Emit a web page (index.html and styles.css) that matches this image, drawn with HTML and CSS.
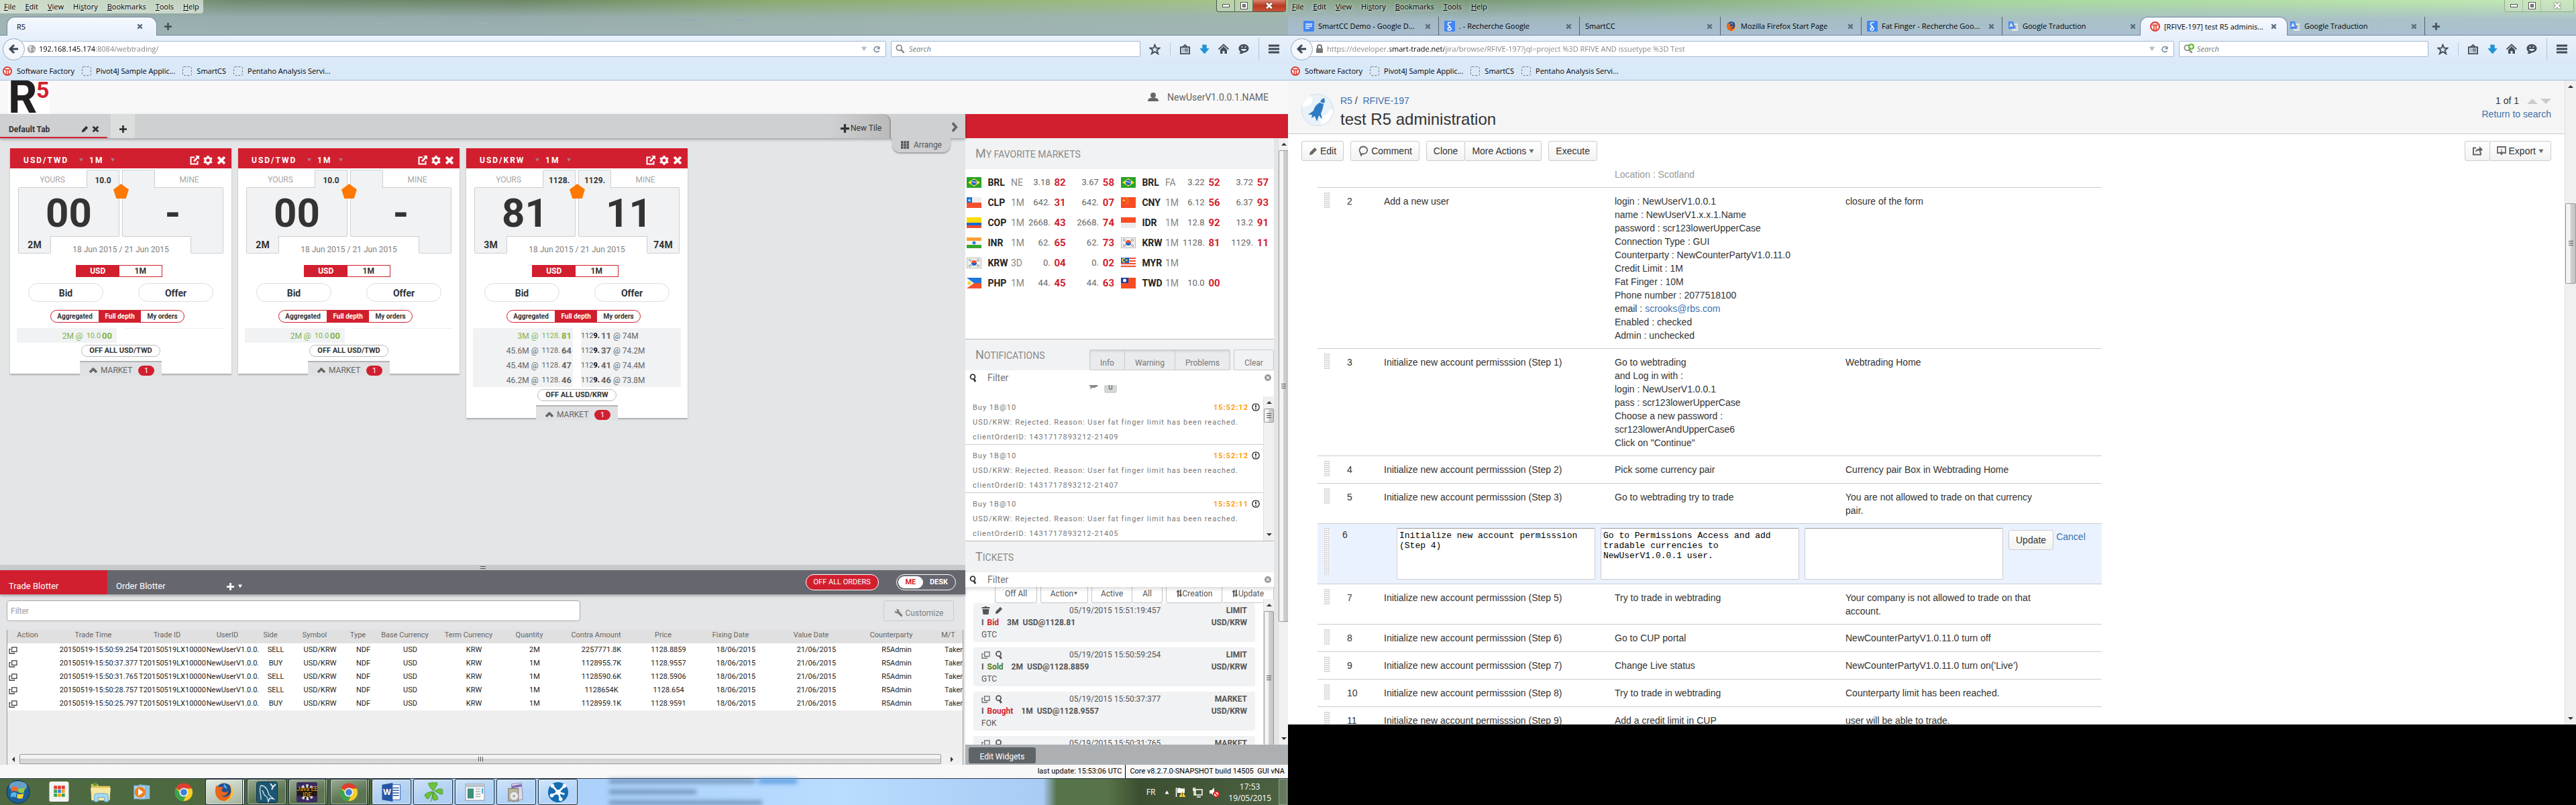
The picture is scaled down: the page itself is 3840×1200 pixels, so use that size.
FILE: index.html
```html
<!DOCTYPE html>
<html lang="en">
<head>
<meta charset="utf-8">
<title>R5 webtrading</title>
<link rel="stylesheet" href="styles.css">
</head>
<body>
<svg class="defs" aria-hidden="true">
  <symbol id="i-back" viewBox="0 0 16 16"><path d="M8 2 2 8l6 6M2.500 8H14" fill="none" stroke="#3b4654" stroke-width="3"/></symbol>
  <symbol id="i-x" viewBox="0 0 10 10"><path d="M1.500 1.500l7 7M8.500 1.500l-7 7" fill="none" stroke="currentColor" stroke-width="2.600"/></symbol>
  <symbol id="i-plus" viewBox="0 0 12 12"><path d="M6 0v12M0 6h12" fill="none" stroke="currentColor" stroke-width="3"/></symbol>
  <symbol id="i-down" viewBox="0 0 10 10"><path d="M0 1h10L5 9z" fill="currentColor"/></symbol>
  <symbol id="i-up" viewBox="0 0 10 10"><path d="M0 9h10L5 1z" fill="currentColor"/></symbol>
  <symbol id="i-chev" viewBox="0 0 12 8"><path d="M1 7l5-5 5 5" fill="none" stroke="currentColor" stroke-width="3.500"/></symbol>
  <symbol id="i-right" viewBox="0 0 10 16"><path d="M1 1l6 7-6 7" fill="none" stroke="currentColor" stroke-width="4"/></symbol>
  <symbol id="i-reload" viewBox="0 0 14 14"><path d="M11 9.500A4.600 4.600 0 1 1 10 3.500" fill="none" stroke="#8496a8" stroke-width="2.200"/><path d="M12.500 1v6h-6z" fill="#8496a8"/></symbol>
  <symbol id="i-globe" viewBox="0 0 16 16"><circle cx="8" cy="8" r="7" fill="#a3a3a3"/><path d="M3 4l4-2 2 3-3 2 2 2-1 4-3-4zM10 8l4-1-2 5z" fill="#e4e4e4"/></symbol>
  <symbol id="i-lock" viewBox="0 0 12 14"><path d="M3 7V4a3 3 0 0 1 6 0v3" fill="none" stroke="#777" stroke-width="2"/><rect x="1" y="6" width="10" height="7" rx="1" fill="#777"/></symbol>
  <symbol id="i-mag" viewBox="0 0 16 16"><circle cx="6" cy="6" r="4.500" fill="none" stroke="currentColor" stroke-width="2"/><path d="M9.500 9.500l5 5" stroke="currentColor" stroke-width="3"/></symbol>
  <symbol id="i-addengine" viewBox="0 0 10 10"><circle cx="5" cy="5" r="5" fill="#5cb615"/><path d="M5 2v6M2 5h6" stroke="#fff" stroke-width="2"/></symbol>
  <symbol id="i-star" viewBox="0 0 18 18"><path d="M9 2l2 5h5.500l-4.300 3.500L14 16l-5-3.200L4 16l1.800-5.500L1.500 7H7z" fill="none" stroke="#454f5b" stroke-width="2"/></symbol>
  <symbol id="i-clip" viewBox="0 0 16 16"><path d="M1 4.500h14V15H1zM5 4l3-3 3 3" fill="none" stroke="#454f5b" stroke-width="2"/><path d="M4 7.500h1.500M7 7.500h6M4 9.700h1.500M7 9.700h6M4 12h1.500M7 12h6" stroke="#454f5b" stroke-width="1.300"/></symbol>
  <symbol id="i-dl" viewBox="0 0 16 16"><path d="M5 1h6v6h4l-7 8-7-8h4z" fill="#1d95dc" stroke="#1278b8" stroke-width=".6"/></symbol>
  <symbol id="i-home" viewBox="0 0 16 16"><path d="M.5 8.500L8 1.500l7.500 7" fill="none" stroke="#454f5b" stroke-width="1.800"/><path d="M3 9l5-5 5 5v6H9.500v-4h-3v4H3z" fill="#454f5b"/></symbol>
  <symbol id="i-chat" viewBox="0 0 16 16"><path d="M8 1c4.500 0 7.500 2.700 7.500 6S12 13.500 8 13.500c-2 1.500-4 2-6.500 1.500C2.500 14 3 13 3 12 1.500 11 .5 9 .5 7 .5 3.700 3.500 1 8 1z" fill="#454f5b"/><path d="M4 8h8c0 4-8 4-8 0z" fill="#dfeafa"/><circle cx="5.500" cy="5" r="1.100" fill="#dfeafa"/><circle cx="10.500" cy="5" r="1.100" fill="#dfeafa"/></symbol>
  <symbol id="i-menu" viewBox="0 0 16 14"><path d="M0 2h16M0 7h16M0 12h16" stroke="#3f4852" stroke-width="3"/></symbol>
  <symbol id="i-factory" viewBox="0 0 14 14"><circle cx="7" cy="7" r="6" fill="#fff" stroke="#dd3b31" stroke-width="2"/><path d="M3 5h8M5.500 5v7M8.500 5v7" stroke="#dd3b31" stroke-width="1.600"/></symbol>
  <symbol id="i-docs" viewBox="0 0 16 16"><rect width="16" height="16" rx="1" fill="#4285f4"/><path d="M3 5h10M3 8h10M3 11h6" stroke="#fff" stroke-width="1.500"/></symbol>
  <symbol id="i-google" viewBox="0 0 16 16"><rect width="16" height="16" rx="1" fill="#4285f4"/><path d="M10.500 2.500H8a2.500 2.500 0 1 0 0 5.200c1 .4-1.500 1 0 2 4 1 2 4.500-.5 4.300-3 0-3.500-3.500 1-3.900" fill="none" stroke="#fff" stroke-width="1.500"/></symbol>
  <symbol id="i-trad" viewBox="0 0 16 16"><rect x="6" y="4" width="9" height="11" fill="#e2e2e2"/><path d="M8 8h5M10.500 7l-2 5M10 9l3 3" stroke="#777"/><path d="M1 1h7l3 11H1z" fill="#4a86ef"/><path d="M3 9l2-5 2 5M4 7.500h2.500" fill="none" stroke="#fff" stroke-width="1.200"/></symbol>
  <symbol id="i-fox" viewBox="0 0 32 32"><circle cx="16" cy="15" r="13" fill="#214f92"/><path d="M16 3a12 12 0 0 1 5 9l-6-4z" fill="#4fa6dd"/><path d="M4 5c1 2 2 3 4 3 2-1 5 0 7 2-3 1-4 3-2 5 3 3 7 1 9-1 0 6-5 9-10 8 5 4 13 1 15-6 1-5 0-8-3-12 6 4 8 12 5 19-4 8-15 10-22 4C1 21 1 12 4 5z" fill="#e9661a"/><path d="M25 4c6 5 7 13 4 19-3 5-8 8-13 8 8-3 13-10 11-20z" fill="#ffc83d"/></symbol>
  <symbol id="i-chrome" viewBox="0 0 32 32"><circle cx="16" cy="16" r="14" fill="#f7ce24"/><path d="M16 16L3.500 9.500A14 14 0 0 1 29 10H16z" fill="#dd3f31"/><path d="M3.500 9.500A14 14 0 0 0 15 30l6-11-10-1z" fill="#3ba24f"/><circle cx="16" cy="16" r="7" fill="#f4f4f4"/><circle cx="16" cy="16" r="5.200" fill="#3f7fd6"/></symbol>
  <symbol id="i-pencil" viewBox="0 0 14 14"><path d="M1 13l1-4.500L9.500 1 13 4.500 5.500 12z" fill="currentColor"/></symbol>
  <symbol id="i-ext" viewBox="0 0 14 14"><path d="M7 2.500H1.500v10h10V8" fill="none" stroke="currentColor" stroke-width="2"/><path d="M8 0h6v6l-2-2-5 5.500L5 7.500 10.200 2z" fill="currentColor"/></symbol>
  <symbol id="i-gear" viewBox="0 0 14 14"><circle cx="7" cy="7" r="4" fill="none" stroke="currentColor" stroke-width="3"/><path d="M7 0v3M7 11v3M1 3.500l2.500 1.500M10.500 9l2.500 1.500M1 10.500L3.500 9M10.500 5L13 3.500" stroke="currentColor" stroke-width="3"/></symbol>
  <symbol id="i-grid" viewBox="0 0 12 12"><path d="M0 2h12M0 6h12M0 10h12" stroke="currentColor" stroke-width="3.400" stroke-dasharray="3.400 .9"/></symbol>
  <symbol id="i-user" viewBox="0 0 16 14"><circle cx="8" cy="4" r="4" fill="currentColor"/><path d="M0 13c0-4 3-5 5-5h6c2 0 5 1 5 5z" fill="currentColor"/></symbol>
  <symbol id="i-pent" viewBox="0 0 24 23"><path d="M12 0l12 9-4.500 14h-15L0 9z" fill="#ff7800"/></symbol>
  <symbol id="i-fmag" viewBox="0 0 12 14"><circle cx="5.500" cy="5" r="3.800" fill="none" stroke="currentColor" stroke-width="2"/><path d="M7 8l3 5" stroke="currentColor" stroke-width="3"/></symbol>
  <symbol id="i-clear" viewBox="0 0 10 10"><circle cx="5" cy="5" r="5" fill="#999"/><path d="M3.200 3.200l3.600 3.600M6.800 3.200L3.200 6.800" stroke="#fff" stroke-width="1.200"/></symbol>
  <symbol id="i-warn" viewBox="0 0 12 12"><circle cx="6" cy="6" r="5.200" fill="none" stroke="#222" stroke-width="1.300"/><path d="M6 2.800v3.800M6 7.700v1.500" stroke="#222" stroke-width="1.800"/></symbol>
  <symbol id="i-trash" viewBox="0 0 12 12"><path d="M0 1h4l.5-1h3L8 1h4v2H0zM1 4h10l-1 8H2z" fill="currentColor"/></symbol>
  <symbol id="i-copy" viewBox="0 0 14 12"><rect x="5" y="1" width="8" height="7" fill="none" stroke="currentColor" stroke-width="1.200"/><path d="M3 4H1v7h8V9.500" fill="none" stroke="currentColor" stroke-width="1.200"/></symbol>
  <symbol id="i-sort" viewBox="0 0 10 12"><path d="M3 12V2M7 0v10" stroke="currentColor" stroke-width="2"/><path d="M0 4l3-4 3 4zM4 8l3 4 3-4z" fill="currentColor"/></symbol>
  <symbol id="i-wrench" viewBox="0 0 14 14"><path d="M1 3l2 2 2-2-2-2c2-1 5 0 5 3l5 6c1 2-1 3.500-2.500 2L5 7C2 8 0 6 1 3z" fill="currentColor"/></symbol>
  <symbol id="i-bubble" viewBox="0 0 16 16"><path d="M8 1.500a6 5.500 0 1 1-2 10.600L5 15.500 4 11A5.700 5.700 0 0 1 8 1.500z" fill="none" stroke="#666" stroke-width="1.800"/></symbol>
  <symbol id="i-share" viewBox="0 0 16 14"><path d="M6 2.500H2v10h11V9" fill="none" stroke="#666" stroke-width="2"/><path d="M5 9c0-4 3-5.500 6-5.500V0l5 5-5 5V6.500C8.500 6.500 7 7 5 9z" fill="#666"/></symbol>
  <symbol id="i-export" viewBox="0 0 14 14"><path d="M4 10H1V1h12v9h-3" fill="none" stroke="#666" stroke-width="1.800"/><path d="M7 4v7M4 9l3 4 3-4z" fill="#666" stroke="#666"/></symbol>
  <symbol id="f-brl" viewBox="0 0 22 16"><rect width="22" height="16" fill="#29a329"/><path d="M11 2l9 6-9 6-9-6z" fill="#f7e62c"/><circle cx="11" cy="8" r="4" fill="#2266c8"/><path d="M7.500 7c3-.5 5 0 7 2" stroke="#fff" fill="none"/></symbol>
  <symbol id="f-clp" viewBox="0 0 22 16"><rect width="22" height="8" fill="#eee"/><rect width="8" height="8" fill="#1b74d8"/><rect y="8" width="22" height="8" fill="#f4502f"/><path d="M4 2l1.800 4.500L2 4h4L2.200 6.500z" fill="#fff"/></symbol>
  <symbol id="f-cop" viewBox="0 0 22 16"><rect width="22" height="8" fill="#ffdc00"/><rect y="8" width="22" height="4" fill="#1d64ce"/><rect y="12" width="22" height="4" fill="#f4502f"/></symbol>
  <symbol id="f-inr" viewBox="0 0 22 16"><rect width="22" height="5" fill="#ffa034"/><rect y="5" width="22" height="6" fill="#f4f4f4"/><rect y="11" width="22" height="5" fill="#36a62b"/><circle cx="11" cy="8" r="2.500" fill="#2a82dd"/></symbol>
  <symbol id="f-krw" viewBox="0 0 22 16"><rect x=".5" y=".5" width="21" height="15" fill="#f0f0f0" stroke="#bbb"/><path d="M7 8a4 4 0 0 1 8 0z" fill="#f4502f"/><path d="M7 8a4 4 0 0 0 8 0z" fill="#1d64ce"/><path d="M3 5l2-3M5 6l2-3M17 2l2 3M15 3l2 3M3 11l2 3M5 10l2 3M19 11l-2 3M17 10l-2 3" stroke="#777"/></symbol>
  <symbol id="f-php" viewBox="0 0 22 16"><rect width="22" height="8" fill="#1d79dc"/><rect y="8" width="22" height="8" fill="#f4502f"/><path d="M0 0l11 8-11 8z" fill="#f4f4f4"/><circle cx="4" cy="8" r="2.500" fill="#ffd21f"/></symbol>
  <symbol id="f-cny" viewBox="0 0 22 16"><rect width="22" height="16" fill="#f84c22"/><path d="M4.500 2l1.800 4.500L2 4h5L2.700 6.500z" fill="#ffdc2e"/><path d="M8 1.500h1M10 4h1M10 7h1M8 9h1" stroke="#ffdc2e" stroke-width="1.300"/></symbol>
  <symbol id="f-idr" viewBox="0 0 22 16"><rect width="22" height="8" fill="#f84c22"/><rect y="8" width="22" height="8" fill="#ececec"/></symbol>
  <symbol id="f-myr" viewBox="0 0 22 16"><rect width="22" height="16" fill="#f4f4f4"/><path d="M0 1h22M0 5h22M0 9h22M0 13h22" stroke="#f4502f" stroke-width="2"/><rect width="12" height="8" fill="#1b5fc4"/><path d="M6 2a2.500 2.500 0 1 0 0 4" fill="none" stroke="#ffdc2e" stroke-width="1.500"/><circle cx="8.500" cy="4" r="1.300" fill="#ffdc2e"/></symbol>
  <symbol id="f-twd" viewBox="0 0 22 16"><rect width="22" height="16" fill="#f84c22"/><rect width="11" height="8" fill="#1b3fa4"/><circle cx="5.500" cy="4" r="2.500" fill="#fff"/></symbol>
  <symbol id="t-start" viewBox="0 0 38 38"><circle cx="19" cy="19" r="18" fill="#1d5f97" stroke="#0e2f49"/><ellipse cx="19" cy="10" rx="14" ry="8" fill="#9cc9e4" opacity=".6"/><path d="M9 12c3-2 6-2 9 0l-1 7c-3-2-6-2-9 0z" fill="#ee6a2b"/><path d="M20 13c3 1 6 1 10-1l-2 8c-3 1-6 1-9-1z" fill="#9acb3a"/><path d="M8 21c3-2 6-2 9 0l-2 7c-3-2-6-2-8 0z" fill="#5bb6ea"/><path d="M18 22c3 1 6 1 10-1l-2 8c-4 1-6 1-9-1z" fill="#fbd135"/></symbol>
  <symbol id="t-apps" viewBox="0 0 30 32"><rect width="30" height="31" rx="3" fill="#f3f3f3"/><path d="M7 9h5M13 9h5M19 9h5" stroke="#e03b2e" stroke-width="5"/><path d="M7 15h5" stroke="#37a24c" stroke-width="5"/><path d="M13 15h5" stroke="#3f7fd6" stroke-width="5"/><path d="M19 15h5M13 21h5" stroke="#f2a51c" stroke-width="5"/><path d="M7 21h5M19 21h5" stroke="#37a24c" stroke-width="5"/></symbol>
  <symbol id="t-folder" viewBox="0 0 34 32"><path d="M2 3h10l2 3h18v22H2z" fill="#e7c55b"/><path d="M5 1h6v5H5z" fill="#5a9c37"/><path d="M1 9h32l-2 20H3z" fill="#f7e7a1"/><path d="M7 31V22q0-4 4-4h14q4 0 4 4v9h-6v-7H13v7z" fill="#a7d9f2" stroke="#5fa7cd"/></symbol>
  <symbol id="t-play" viewBox="0 0 30 28"><path d="M10 1l18 2v22l-18 1z" fill="#8fc0e2"/><rect x="2" y="3" width="19" height="22" fill="#aed4ec" stroke="#6da6cd"/><circle cx="12" cy="14" r="9" fill="#f08020"/><path d="M9 8l8 6-8 6z" fill="#fff"/></symbol>
  <symbol id="t-sql" viewBox="0 0 32 32"><rect x=".5" y=".5" width="31" height="31" rx="3" fill="#1b5673" stroke="#0d3146"/><path d="M7 27C8 20 3 12 7 6c6 0 10 6 12 14l7 6-6-1-2 5c-1-7-3-8-5-9-2-2-2-4-4-8" fill="none" stroke="#d9ebf4" stroke-width="1.300"/><path d="M21 3l4 5 4-4M25 8l-2 4" fill="none" stroke="#eee" stroke-width="2"/></symbol>
  <symbol id="t-java" viewBox="0 0 34 32"><rect width="33" height="32" rx="3" fill="#3b2a63"/><circle cx="16.500" cy="16" r="10" fill="#22180f" stroke="#ddd" stroke-width="5" stroke-dasharray="3.500 3"/><rect x="1" y="9" width="31" height="13" fill="#22180f"/></symbol>
  <symbol id="t-word" viewBox="0 0 32 32"><path d="M16 4h14v24H16z" fill="#fff" stroke="#2a5ba8"/><path d="M18 9h10M18 13h10M18 17h10M18 21h10" stroke="#2a5ba8" stroke-width="1.500"/><path d="M1 4l17-3v30L1 28z" fill="#2555a2"/></symbol>
  <symbol id="t-clover" viewBox="0 0 32 32"><path d="M16 14C6 4 8 0 12 3q3-4 5 0 5-4 5 1zM15 15C4 16 0 22 5 22q0 5 4 3zM18 14c10-6 14-2 11 1q3 4-2 4zM16 15c7 7 9 13 4 12-3 3-6-1-5-5zM15 15q1 8-3 15" fill="#6cc23c" stroke="#4a9a26"/></symbol>
  <symbol id="t-note" viewBox="0 0 32 28"><rect x="1" y="1" width="30" height="26" fill="#fdfdfd" stroke="#8a8f96"/><path d="M1 4h30" stroke="#b8c3ce" stroke-width="4"/><rect x="4" y="8" width="10" height="16" fill="#3f8f80"/><path d="M17 9h8M17 13h8M17 17h8M17 21h8" stroke="#bbb" stroke-width="2"/><path d="M28 8v8" stroke="#2a9adf" stroke-width="2"/></symbol>
  <symbol id="t-box" viewBox="0 0 32 32"><path d="M8 3l16-2 2 26-16 4z" fill="#dfdce9" stroke="#8d86a8"/><path d="M8 8l16-3" stroke="#8268b4" stroke-width="4"/><rect x="3" y="10" width="16" height="20" fill="#b9b49c" stroke="#77705d"/><circle cx="12" cy="22" r="7" fill="#e8e8e8" stroke="#999"/><circle cx="12" cy="22" r="2" fill="#9a9"/></symbol>
  <symbol id="t-net" viewBox="0 0 34 34"><circle cx="17" cy="17" r="16" fill="#136cb2"/><path d="M17 17L8 7M17 17L27 7M17 17L7 22M17 17l4 11M17 17l10 3" stroke="#fff" stroke-width="3"/><g fill="#fff"><circle cx="17" cy="17" r="4"/><circle cx="8" cy="7" r="3"/><circle cx="27" cy="7" r="3"/><circle cx="7" cy="22" r="3"/><circle cx="21" cy="28" r="3"/></g></symbol>
  <symbol id="i-app" viewBox="0 0 14 16"><rect x=".5" y="1.500" width="13" height="13" rx="2" fill="none" stroke="#777" stroke-dasharray="3 2"/></symbol>
</svg>

<div class="monitor monitor-left">
  <section class="browser">
    <header class="chrome">
      <div class="aero">
        <nav class="menubar boxed"><a href="#"><u>F</u>ile</a><a href="#"><u>E</u>dit</a><a href="#"><u>V</u>iew</a><a href="#">Hi<u>s</u>tory</a><a href="#"><u>B</u>ookmarks</a><a href="#"><u>T</u>ools</a><a href="#"><u>H</u>elp</a></nav>
        <div class="winctl"><button aria-label="Minimize"><i class="min"></i></button><button aria-label="Restore"><i class="max"></i></button><button class="close" aria-label="Close"><svg width="14" height="11"><use href="#i-x"/></svg></button></div>
        <div class="tabs"><div class="tab active"><span>R5</span><svg width="9" height="9"><use href="#i-x"/></svg></div><button class="newtab" aria-label="New tab"><svg width="11" height="11"><use href="#i-plus"/></svg></button></div>
      </div>
      <div class="navbar">
        <button class="back" aria-label="Back"><svg width="16" height="16"><use href="#i-back"/></svg></button>
        <div class="urlbox"><svg width="14" height="14"><use href="#i-globe"/></svg><input class="url url-app" aria-label="Address" value="192.168.145.174:8084/webtrading/"><svg class="dim" width="10" height="8"><use href="#i-down"/></svg><svg width="12" height="13"><use href="#i-reload"/></svg></div>
        <div class="searchbox"><svg width="14" height="14"><use href="#i-mag"/></svg><input aria-label="Search" placeholder="Search"></div>
        <div class="tools"><svg width="17" height="17"><use href="#i-star"/></svg><i class="bar"></i><svg width="15" height="15"><use href="#i-clip"/></svg><svg width="15" height="15"><use href="#i-dl"/></svg><svg width="16" height="16"><use href="#i-home"/></svg><svg width="16" height="16"><use href="#i-chat"/></svg><i class="bar tall"></i><svg width="16" height="14"><use href="#i-menu"/></svg></div>
      </div>
      <nav class="bookmarks"><a href="#"><svg width="14" height="14"><use href="#i-factory"/></svg>Software Factory</a><a href="#"><svg width="14" height="16"><use href="#i-app"/></svg>Pivot4J Sample Applic...</a><a href="#"><svg width="14" height="16"><use href="#i-app"/></svg>SmartCS</a><a href="#"><svg width="14" height="16"><use href="#i-app"/></svg>Pentaho Analysis Servi...</a></nav>
    </header>

    <div class="apphead"><div class="logo"><span class="logo-r">R</span><span class="logo-5">5</span></div><div class="user"><svg width="16" height="14"><use href="#i-user"/></svg>NewUserV1.0.0.1.NAME</div></div>

    <div class="workspace">
      <main class="desk">
        <div class="desktabs">
          <div class="desktab">Default Tab<span class="grow"></span><svg width="11" height="11"><use href="#i-pencil"/></svg><svg width="11" height="11"><use href="#i-x"/></svg></div>
          <button class="addtab" aria-label="Add tab"><svg width="11" height="11"><use href="#i-plus"/></svg></button>
          <span class="grow"></span>
          <button class="newtile"><svg width="13" height="13"><use href="#i-plus"/></svg>New Tile</button>
          <div class="arrangecell"><svg width="9" height="15"><use href="#i-right"/></svg><button class="arrange"><svg width="12" height="12"><use href="#i-grid"/></svg>Arrange</button></div>
        </div>

        <div class="tiles">
          <article class="tile">
            <header><b>USD/TWD</b><svg width="6" height="7"><use href="#i-down"/></svg><b class="ten">1M</b><svg width="6" height="7"><use href="#i-down"/></svg><span class="grow"></span><svg width="14" height="14"><use href="#i-ext"/></svg><svg width="14" height="14"><use href="#i-gear"/></svg><svg width="14" height="14"><use href="#i-x"/></svg></header>
            <div class="quote">
              <div class="q-head"><span class="q-side">YOURS</span><b class="q-tab">10.0</b><b class="q-tab"></b><span class="q-side">MINE</span></div>
              <div class="q-mid"><button>00</button><button>-</button></div>
              <div class="q-foot"><b class="q-tab">2M</b><span>18 Jun 2015 / 21 Jun 2015</span><b class="q-tab"></b></div>
              <svg class="pent" width="23" height="22"><use href="#i-pent"/></svg>
            </div>
            <div class="amount"><button class="on">USD</button><button>1M</button></div>
            <div class="sides"><button>Bid</button><button>Offer</button></div>
            <div class="seg"><button>Aggregated</button><button class="on">Full depth</button><button>My orders</button></div>
            <div class="depth"><div class="bids"><p class="best">2M @ <small>10.0</small><b>00</b></p></div><div class="asks"></div></div>
            <button class="offall">OFF ALL USD/TWD</button>
            <div class="market"><svg width="12" height="8"><use href="#i-chev"/></svg>MARKET<em>1</em></div>
          </article>
          <article class="tile">
            <header><b>USD/TWD</b><svg width="6" height="7"><use href="#i-down"/></svg><b class="ten">1M</b><svg width="6" height="7"><use href="#i-down"/></svg><span class="grow"></span><svg width="14" height="14"><use href="#i-ext"/></svg><svg width="14" height="14"><use href="#i-gear"/></svg><svg width="14" height="14"><use href="#i-x"/></svg></header>
            <div class="quote">
              <div class="q-head"><span class="q-side">YOURS</span><b class="q-tab">10.0</b><b class="q-tab"></b><span class="q-side">MINE</span></div>
              <div class="q-mid"><button>00</button><button>-</button></div>
              <div class="q-foot"><b class="q-tab">2M</b><span>18 Jun 2015 / 21 Jun 2015</span><b class="q-tab"></b></div>
              <svg class="pent" width="23" height="22"><use href="#i-pent"/></svg>
            </div>
            <div class="amount"><button class="on">USD</button><button>1M</button></div>
            <div class="sides"><button>Bid</button><button>Offer</button></div>
            <div class="seg"><button>Aggregated</button><button class="on">Full depth</button><button>My orders</button></div>
            <div class="depth"><div class="bids"><p class="best">2M @ <small>10.0</small><b>00</b></p></div><div class="asks"></div></div>
            <button class="offall">OFF ALL USD/TWD</button>
            <div class="market"><svg width="12" height="8"><use href="#i-chev"/></svg>MARKET<em>1</em></div>
          </article>
          <article class="tile">
            <header><b>USD/KRW</b><svg width="6" height="7"><use href="#i-down"/></svg><b class="ten">1M</b><svg width="6" height="7"><use href="#i-down"/></svg><span class="grow"></span><svg width="14" height="14"><use href="#i-ext"/></svg><svg width="14" height="14"><use href="#i-gear"/></svg><svg width="14" height="14"><use href="#i-x"/></svg></header>
            <div class="quote">
              <div class="q-head"><span class="q-side">YOURS</span><b class="q-tab">1128.</b><b class="q-tab">1129.</b><span class="q-side">MINE</span></div>
              <div class="q-mid"><button>81</button><button>11</button></div>
              <div class="q-foot"><b class="q-tab">3M</b><span>18 Jun 2015 / 21 Jun 2015</span><b class="q-tab">74M</b></div>
              <svg class="pent" width="23" height="22"><use href="#i-pent"/></svg>
            </div>
            <div class="amount"><button class="on">USD</button><button>1M</button></div>
            <div class="sides"><button>Bid</button><button>Offer</button></div>
            <div class="seg"><button>Aggregated</button><button class="on">Full depth</button><button>My orders</button></div>
            <div class="depth deep">
              <div class="bids"><p class="best">3M @ <small>1128.</small><b>81</b></p><p>45.6M @ <small>1128.</small><b>64</b></p><p>45.4M @ <small>1128.</small><b>47</b></p><p>46.2M @ <small>1128.</small><b>46</b></p></div>
              <div class="asks"><p><small>112<strong>9.</strong></small><b>11</b> @ 74M</p><p><small>112<strong>9.</strong></small><b>37</b> @ 74.2M</p><p><small>112<strong>9.</strong></small><b>41</b> @ 74.4M</p><p><small>112<strong>9.</strong></small><b>46</b> @ 73.8M</p></div>
            </div>
            <button class="offall">OFF ALL USD/KRW</button>
            <div class="market"><svg width="12" height="8"><use href="#i-chev"/></svg>MARKET<em>1</em></div>
          </article>
        </div>

        <div class="splitter"><i></i></div>
        <section class="blotter">
          <div class="blotbar"><button class="btab on">Trade Blotter</button><button class="btab">Order Blotter</button><button class="badd" aria-label="Add blotter"><svg width="11" height="11"><use href="#i-plus"/></svg><svg width="8" height="6"><use href="#i-down"/></svg></button><span class="grow"></span><button class="offorders">OFF ALL ORDERS</button><div class="medesk"><button class="on">ME</button><button>DESK</button></div></div>
          <div class="blotfilter"><input class="bfilter" aria-label="Filter trades" placeholder="Filter"><button class="custom"><svg width="13" height="14"><use href="#i-wrench"/></svg>Customize</button></div>
          <div class="blotgrid">
            <table>
              <colgroup><col class="c76"><col class="c120"><col class="c100"><col class="c80"><col class="c48"><col class="c84"><col class="c45"><col class="c95"><col class="c95"><col class="c86"><col class="c113"><col class="c87"><col class="c114"><col class="c126"><col class="c113"><col class="c57"></colgroup>
              <thead><tr><th>Action</th><th>Trade Time</th><th>Trade ID</th><th>UserID</th><th>Side</th><th>Symbol</th><th>Type</th><th>Base Currency</th><th>Term Currency</th><th>Quantity</th><th>Contra Amount</th><th>Price</th><th>Fixing Date</th><th>Value Date</th><th>Counterparty</th><th>M/T</th></tr></thead>
              <tbody>
                <tr><td><svg width="13" height="11"><use href="#i-copy"/></svg></td><td>20150519-15:50:59.254</td><td>T20150519LX10000</td><td>NewUserV1.0.0.</td><td>SELL</td><td>USD/KRW</td><td>NDF</td><td>USD</td><td>KRW</td><td>2M</td><td>2257771.8K</td><td>1128.8859</td><td>18/06/2015</td><td>21/06/2015</td><td>R5Admin</td><td>Taker</td></tr>
                <tr><td><svg width="13" height="11"><use href="#i-copy"/></svg></td><td>20150519-15:50:37.377</td><td>T20150519LX10000</td><td>NewUserV1.0.0.</td><td>BUY</td><td>USD/KRW</td><td>NDF</td><td>USD</td><td>KRW</td><td>1M</td><td>1128955.7K</td><td>1128.9557</td><td>18/06/2015</td><td>21/06/2015</td><td>R5Admin</td><td>Taker</td></tr>
                <tr><td><svg width="13" height="11"><use href="#i-copy"/></svg></td><td>20150519-15:50:31.765</td><td>T20150519LX10000</td><td>NewUserV1.0.0.</td><td>SELL</td><td>USD/KRW</td><td>NDF</td><td>USD</td><td>KRW</td><td>1M</td><td>1128590.6K</td><td>1128.5906</td><td>18/06/2015</td><td>21/06/2015</td><td>R5Admin</td><td>Taker</td></tr>
                <tr><td><svg width="13" height="11"><use href="#i-copy"/></svg></td><td>20150519-15:50:28.757</td><td>T20150519LX10000</td><td>NewUserV1.0.0.</td><td>SELL</td><td>USD/KRW</td><td>NDF</td><td>USD</td><td>KRW</td><td>1M</td><td>1128654K</td><td>1128.654</td><td>18/06/2015</td><td>21/06/2015</td><td>R5Admin</td><td>Taker</td></tr>
                <tr><td><svg width="13" height="11"><use href="#i-copy"/></svg></td><td>20150519-15:50:25.797</td><td>T20150519LX10000</td><td>NewUserV1.0.0.</td><td>BUY</td><td>USD/KRW</td><td>NDF</td><td>USD</td><td>KRW</td><td>1M</td><td>1128959.1K</td><td>1128.9591</td><td>18/06/2015</td><td>21/06/2015</td><td>R5Admin</td><td>Taker</td></tr>
              </tbody>
            </table>
            <span class="grow"></span>
            <div class="hscroll"><i class="ar l"></i><div class="hthumb"><i class="grip"></i></div><i class="ar r"></i></div>
          </div>
        </section>
      </main>

      <aside class="side">
        <div class="redbar"></div>
        <div class="sidebody">
          <div class="panels">
            <section class="panel fav">
              <div class="phead"><h2>My favorite markets</h2></div>
              <div class="favgrid">
                <table><tbody>
                  <tr><td><svg width="22" height="16"><use href="#f-brl"/></svg></td><th>BRL</th><td>NE</td><td>3.18</td><td>82</td><td>3.67</td><td>58</td></tr>
                  <tr><td><svg width="22" height="16"><use href="#f-clp"/></svg></td><th>CLP</th><td>1M</td><td>642.</td><td>31</td><td>642.</td><td>07</td></tr>
                  <tr><td><svg width="22" height="16"><use href="#f-cop"/></svg></td><th>COP</th><td>1M</td><td>2668.</td><td>43</td><td>2668.</td><td>74</td></tr>
                  <tr><td><svg width="22" height="16"><use href="#f-inr"/></svg></td><th>INR</th><td>1M</td><td>62.</td><td>65</td><td>62.</td><td>73</td></tr>
                  <tr><td><svg width="22" height="16"><use href="#f-krw"/></svg></td><th>KRW</th><td>3D</td><td>0.</td><td>04</td><td>0.</td><td>02</td></tr>
                  <tr><td><svg width="22" height="16"><use href="#f-php"/></svg></td><th>PHP</th><td>1M</td><td>44.</td><td>45</td><td>44.</td><td>63</td></tr>
                </tbody></table>
                <table><tbody>
                  <tr><td><svg width="22" height="16"><use href="#f-brl"/></svg></td><th>BRL</th><td>FA</td><td>3.22</td><td>52</td><td>3.72</td><td>57</td></tr>
                  <tr><td><svg width="22" height="16"><use href="#f-cny"/></svg></td><th>CNY</th><td>1M</td><td>6.12</td><td>56</td><td>6.37</td><td>93</td></tr>
                  <tr><td><svg width="22" height="16"><use href="#f-idr"/></svg></td><th>IDR</th><td>1M</td><td>12.8</td><td>92</td><td>13.2</td><td>91</td></tr>
                  <tr><td><svg width="22" height="16"><use href="#f-krw"/></svg></td><th>KRW</th><td>1M</td><td>1128.</td><td>81</td><td>1129.</td><td>11</td></tr>
                  <tr><td><svg width="22" height="16"><use href="#f-myr"/></svg></td><th>MYR</th><td>1M</td><td></td><td></td><td></td><td></td></tr>
                  <tr><td><svg width="22" height="16"><use href="#f-twd"/></svg></td><th>TWD</th><td>1M</td><td>10.0</td><td>00</td><td></td><td></td></tr>
                </tbody></table>
              </div>
            </section>

            <section class="panel notif">
              <div class="phead"><h2>Notifications</h2><span class="grow"></span><div class="btngroup"><button>Info</button><button>Warning</button><button>Problems</button></div><button class="clearbtn">Clear</button></div>
              <div class="pfilter"><svg width="11" height="13"><use href="#i-fmag"/></svg><input aria-label="Filter notifications" placeholder="Filter"><svg width="10" height="10"><use href="#i-clear"/></svg></div>
              <div class="peek"><svg width="14" height="6" viewBox="0 0 14 6"><path d="M0 0h14c-2 4-5 4-8 4l-5 2 2-3z" fill="#888"/></svg><span>0</span></div>
              <div class="scrollrow">
                <ul class="notes">
                  <li><div><span>Buy 1B@10</span><time>15:52:12</time><svg width="12" height="12"><use href="#i-warn"/></svg></div><p>USD/KRW: Rejected. Reason: User fat finger limit has been reached.</p><p>clientOrderID: 1431717893212-21409</p></li>
                  <li><div><span>Buy 1B@10</span><time>15:52:12</time><svg width="12" height="12"><use href="#i-warn"/></svg></div><p>USD/KRW: Rejected. Reason: User fat finger limit has been reached.</p><p>clientOrderID: 1431717893212-21407</p></li>
                  <li><div><span>Buy 1B@10</span><time>15:52:11</time><svg width="12" height="12"><use href="#i-warn"/></svg></div><p>USD/KRW: Rejected. Reason: User fat finger limit has been reached.</p><p>clientOrderID: 1431717893212-21405</p></li>
                </ul>
                <div class="vscroll"><i class="ar u"></i><div class="vthumb tiny"><i class="grip"></i></div><span class="grow"></span><i class="ar d"></i></div>
              </div>
            </section>

            <section class="panel tickets">
              <div class="phead"><h2>Tickets</h2></div>
              <div class="pfilter shade"><svg width="11" height="13"><use href="#i-fmag"/></svg><input aria-label="Filter tickets" placeholder="Filter"><svg width="10" height="10"><use href="#i-clear"/></svg></div>
              <div class="tbtns"><button class="w63">Off All</button><button class="w71">Action<svg width="7" height="5"><use href="#i-down"/></svg></button><div><button class="w61">Active</button><button class="w45">All</button></div><div><button class="w84"><svg width="10" height="11"><use href="#i-sort"/></svg>Creation</button><button class="w77"><svg width="10" height="11"><use href="#i-sort"/></svg>Update</button></div></div>
              <div class="scrollrow trow">
                <div class="cards">
                  <article><div><svg width="13" height="12"><use href="#i-trash"/></svg><svg width="12" height="12"><use href="#i-pencil"/></svg><time>05/19/2015 15:51:19:457</time><b>LIMIT</b></div><div><b>I</b><b class="red">Bid</b><b class="deal">3M&nbsp; USD@1128.81</b><b>USD/KRW</b></div><div>GTC</div></article>
                  <article><div><svg width="13" height="11"><use href="#i-copy"/></svg><svg width="12" height="13"><use href="#i-fmag"/></svg><time>05/19/2015 15:50:59:254</time><b>LIMIT</b></div><div><b>I</b><b class="green">Sold</b><b class="deal">2M&nbsp; USD@1128.8859</b><b>USD/KRW</b></div><div>GTC</div></article>
                  <article><div><svg width="13" height="11"><use href="#i-copy"/></svg><svg width="12" height="13"><use href="#i-fmag"/></svg><time>05/19/2015 15:50:37:377</time><b>MARKET</b></div><div><b>I</b><b class="red">Bought</b><b class="deal">1M&nbsp; USD@1128.9557</b><b>USD/KRW</b></div><div>FOK</div></article>
                  <article><div><svg width="13" height="11"><use href="#i-copy"/></svg><svg width="12" height="13"><use href="#i-fmag"/></svg><time>05/19/2015 15:50:31:765</time><b>MARKET</b></div></article>
                </div>
                <div class="vscroll"><i class="ar u"></i><div class="vthumb full"><i class="grip"></i></div></div>
              </div>
            </section>
          </div>
          <div class="vscroll outer"><i class="ar u"></i><div class="vthumb long"><i class="grip"></i></div><span class="grow"></span><i class="ar d"></i></div>
        </div>
        <div class="editbar"><button>Edit Widgets</button></div>
      </aside>
    </div>
    <footer class="status"><span>last update: 15:53:06 UTC</span><span>Core v8.2.7.0-SNAPSHOT build 14505&nbsp; GUI vNA</span></footer>
  </section>

  <nav class="taskbar">
    <button class="orb" aria-label="Start"><svg width="36" height="37"><use href="#t-start"/></svg></button>
    <button aria-label="Apps"><svg width="30" height="31"><use href="#t-apps"/></svg></button>
    <button aria-label="Explorer"><svg width="32" height="30"><use href="#t-folder"/></svg></button>
    <button aria-label="Player"><svg width="27" height="26"><use href="#t-play"/></svg></button>
    <button aria-label="Chrome"><svg width="30" height="30"><use href="#i-chrome"/></svg></button>
    <button class="open multi lit" aria-label="Firefox"><svg width="30" height="31"><use href="#i-fox"/></svg></button>
    <button class="open" aria-label="Workbench"><svg width="32" height="32"><use href="#t-sql"/></svg></button>
    <button class="open multi java" aria-label="Java EE IDE"><svg width="32" height="32"><use href="#t-java"/></svg><span>Java EE<br>IDE</span></button>
    <button class="open multi" aria-label="Chrome windows"><svg width="30" height="30"><use href="#i-chrome"/></svg></button>
    <button class="open word" aria-label="Word"><svg width="31" height="30"><use href="#t-word"/></svg><span>W</span></button>
    <button class="open" aria-label="Clover"><svg width="32" height="32"><use href="#t-clover"/></svg></button>
    <button class="open" aria-label="Notes"><svg width="30" height="26"><use href="#t-note"/></svg></button>
    <button class="open" aria-label="Installer"><svg width="30" height="32"><use href="#t-box"/></svg></button>
    <button class="open" aria-label="Network"><svg width="32" height="32"><use href="#t-net"/></svg></button>
    <div class="ghost"><i></i><i></i><i></i></div>
    <span class="grow"></span>
    <div class="tray"><span>FR</span><svg width="7" height="6"><use href="#i-up"/></svg>
      <svg width="16" height="16" viewBox="0 0 16 16"><path d="M1.500 1v14" stroke="#fff" stroke-width="1.500"/><path d="M3 2c4-2 6 2 11 0v7H3z" fill="#fff"/><path d="M10.500 6l5 9h-10z" fill="#fc3"/><path d="M10.500 9v3M10.500 13v1" stroke="#333"/></svg>
      <svg width="16" height="16" viewBox="0 0 16 16"><path d="M5 4h10v8H5zM7 15h6M2 1v4M4 1v4M1 5h4M3 5v7h3" fill="none" stroke="#fff" stroke-width="1.500"/></svg>
      <svg width="16" height="16" viewBox="0 0 16 16"><path d="M1 5h3l4-4v13L4 10H1z" fill="#fff"/><circle cx="11" cy="11" r="4" fill="#fff" stroke="#e02020" stroke-width="2"/><path d="M8 8l6 6" stroke="#e02020" stroke-width="2"/></svg>
      <time>17:53<br>19/05/2015</time></div>
    <button class="showdesk" aria-label="Show desktop"></button>
  </nav>
</div>

<div class="monitor monitor-right">
  <section class="browser">
    <header class="chrome">
      <div class="aero aero2">
        <nav class="menubar"><a href="#"><u>F</u>ile</a><a href="#"><u>E</u>dit</a><a href="#"><u>V</u>iew</a><a href="#">Hi<u>s</u>tory</a><a href="#"><u>B</u>ookmarks</a><a href="#"><u>T</u>ools</a><a href="#"><u>H</u>elp</a></nav>
        <div class="winctl clear"><button aria-label="Minimize"><i class="min"></i></button><button aria-label="Restore"><i class="max"></i></button><button aria-label="Close"><svg width="14" height="11"><use href="#i-x"/></svg></button></div>
        <div class="tabs many">
          <div class="tab"><svg width="16" height="16"><use href="#i-docs"/></svg><span>SmartCC Demo - Google D...</span><svg width="9" height="9"><use href="#i-x"/></svg></div>
          <div class="tab"><svg width="16" height="16"><use href="#i-google"/></svg><span>. - Recherche Google</span><svg width="9" height="9"><use href="#i-x"/></svg></div>
          <div class="tab"><span>SmartCC</span><svg width="9" height="9"><use href="#i-x"/></svg></div>
          <div class="tab"><svg width="16" height="16"><use href="#i-fox"/></svg><span>Mozilla Firefox Start Page</span><svg width="9" height="9"><use href="#i-x"/></svg></div>
          <div class="tab"><svg width="16" height="16"><use href="#i-google"/></svg><span>Fat Finger - Recherche Goo...</span><svg width="9" height="9"><use href="#i-x"/></svg></div>
          <div class="tab nosep"><svg width="16" height="16"><use href="#i-trad"/></svg><span>Google Traduction</span><svg width="9" height="9"><use href="#i-x"/></svg></div>
          <div class="tab active"><svg width="15" height="15"><use href="#i-factory"/></svg><span>[RFIVE-197] test R5 adminis...</span><svg width="9" height="9"><use href="#i-x"/></svg></div>
          <div class="tab"><svg width="16" height="16"><use href="#i-trad"/></svg><span>Google Traduction</span><svg width="9" height="9"><use href="#i-x"/></svg></div>
          <button class="newtab" aria-label="New tab"><svg width="11" height="11"><use href="#i-plus"/></svg></button>
        </div>
      </div>
      <div class="navbar">
        <button class="back" aria-label="Back"><svg width="16" height="16"><use href="#i-back"/></svg></button>
        <div class="urlbox"><svg width="14" height="14"><use href="#i-lock"/></svg><input class="url url-jira" aria-label="Address" value="https://developer.smart-trade.net/jira/browse/RFIVE-197?jql=project %3D RFIVE AND issuetype %3D Test"><svg class="dim" width="10" height="8"><use href="#i-down"/></svg><svg width="12" height="13"><use href="#i-reload"/></svg></div>
        <div class="searchbox engine"><svg width="14" height="14"><use href="#i-mag"/></svg><svg class="plusbadge" width="9" height="9"><use href="#i-addengine"/></svg><input aria-label="Search" placeholder="Search"></div>
        <div class="tools"><svg width="17" height="17"><use href="#i-star"/></svg><i class="bar"></i><svg width="15" height="15"><use href="#i-clip"/></svg><svg width="15" height="15"><use href="#i-dl"/></svg><svg width="16" height="16"><use href="#i-home"/></svg><svg width="16" height="16"><use href="#i-chat"/></svg><i class="bar tall"></i><svg width="16" height="14"><use href="#i-menu"/></svg></div>
      </div>
      <nav class="bookmarks"><a href="#"><svg width="14" height="14"><use href="#i-factory"/></svg>Software Factory</a><a href="#"><svg width="14" height="16"><use href="#i-app"/></svg>Pivot4J Sample Applic...</a><a href="#"><svg width="14" height="16"><use href="#i-app"/></svg>SmartCS</a><a href="#"><svg width="14" height="16"><use href="#i-app"/></svg>Pentaho Analysis Servi...</a></nav>
    </header>

    <div class="jira">
      <main class="issue">
        <header class="ihead">
          <svg class="avatar" width="48" height="48" viewBox="0 0 48 48"><circle cx="24" cy="24" r="23.500" fill="#e9f1f9" stroke="#d5dbe2"/><path d="M1 20A23.500 23.500 0 0 1 13 3c6 6 6 14-12 17zM30 46c-4-10 2-14 8-15 2-6 5-9 9-8a23 23 0 0 1-17 23z" fill="#fff"/><path d="M34 6c1 3 1 5 0 8l-6-2c1-3 3-5 6-6zM27 13l6 2c-1 7-2 10-4 14l2 9-5-6-3 9-3-8-5 3 1-5-6 0 8-6c1-5 4-9 9-12z" fill="#2f7bc2"/></svg>
          <div class="ititle"><p><a href="#">R5</a> / &nbsp;<a href="#">RFIVE-197</a></p><h1>test R5 administration</h1></div>
          <div class="ipager"><p>1 of 1 <svg class="first" width="16" height="8" viewBox="0 0 16 8"><path d="M0 8h16L8 0z" fill="#ccc"/></svg><svg width="16" height="8" viewBox="0 0 16 8"><path d="M0 0h16L8 8z" fill="#ccc"/></svg></p><a href="#">Return to search</a></div>
        </header>
        <div class="ibar">
          <button class="jbtn"><svg width="13" height="13"><use href="#i-pencil"/></svg>Edit</button>
          <button class="jbtn"><svg width="16" height="16"><use href="#i-bubble"/></svg>Comment</button>
          <div class="jgroup"><button class="jbtn">Clone</button><button class="jbtn">More Actions<svg width="8" height="7"><use href="#i-down"/></svg></button></div>
          <button class="jbtn">Execute</button>
          <span class="grow"></span>
          <div class="jgroup"><button class="jbtn" aria-label="Share"><svg width="16" height="14"><use href="#i-share"/></svg></button><button class="jbtn"><svg width="14" height="14"><use href="#i-export"/></svg>Export<svg width="8" height="7"><use href="#i-down"/></svg></button></div>
        </div>
        <table class="steps">
          <colgroup><col class="s34"><col class="s55"><col class="s344"><col class="s344"><col class="s320"><col></colgroup>
          <tbody>
            <tr class="first"><td></td><td></td><td></td><td><span>Location : Scotland</span></td><td></td><td></td></tr>
            <tr><td><i class="drag"></i></td><td>2</td><td>Add a new user</td><td>login : NewUserV1.0.0.1<br>name : NewUserV1.x.x.1.Name<br>password : scr123lowerUpperCase<br>Connection Type : GUI<br>Counterparty : NewCounterPartyV1.0.11.0<br>Credit Limit : 1M<br>Fat Finger : 10M<br>Phone number : 2077518100<br>email : <a href="#">scrooks@rbs.com</a><br>Enabled : checked<br>Admin : unchecked</td><td>closure of the form</td><td></td></tr>
            <tr><td><i class="drag"></i></td><td>3</td><td>Initialize new account permisssion (Step 1)</td><td>Go to webtrading<br>and Log in with :<br>login : NewUserV1.0.0.1<br>pass : scr123lowerUpperCase<br>Choose a new password :<br>scr123lowerAndUpperCase6<br>Click on "Continue"</td><td>Webtrading Home</td><td></td></tr>
            <tr><td><i class="drag"></i></td><td>4</td><td>Initialize new account permisssion (Step 2)</td><td>Pick some currency pair</td><td>Currency pair Box in Webtrading Home</td><td></td></tr>
            <tr><td><i class="drag"></i></td><td>5</td><td>Initialize new account permisssion (Step 3)</td><td>Go to webtrading try to trade</td><td>You are not allowed to trade on that currency pair.</td><td></td></tr>
            <tr class="editing"><td><i class="drag tall"></i></td><td>6</td><td colspan="4"><form class="editrow"><textarea aria-label="Test step">Initialize new account permisssion (Step 4)</textarea><textarea aria-label="Test data">Go to Permissions Access and add tradable currencies to NewUserV1.0.0.1 user.</textarea><textarea aria-label="Expected result"></textarea><button type="button" class="jbtn">Update</button><a href="#">Cancel</a></form></td></tr>
            <tr><td><i class="drag"></i></td><td>7</td><td>Initialize new account permisssion (Step 5)</td><td>Try to trade in webtrading</td><td>Your company is not allowed to trade on that account.</td><td></td></tr>
            <tr><td><i class="drag"></i></td><td>8</td><td>Initialize new account permisssion (Step 6)</td><td>Go to CUP portal</td><td>NewCounterPartyV1.0.11.0 turn off</td><td></td></tr>
            <tr><td><i class="drag"></i></td><td>9</td><td>Initialize new account permisssion (Step 7)</td><td>Change Live status</td><td>NewCounterPartyV1.0.11.0 turn on('Live')</td><td></td></tr>
            <tr><td><i class="drag"></i></td><td>10</td><td>Initialize new account permisssion (Step 8)</td><td>Try to trade in webtrading</td><td>Counterparty limit has been reached.</td><td></td></tr>
            <tr><td><i class="drag"></i></td><td>11</td><td>Initialize new account permisssion (Step 9)</td><td>Add a credit limit in CUP</td><td>user will be able to trade.</td><td></td></tr>
          </tbody>
        </table>
      </main>
      <div class="vscroll jscroll"><i class="ar u"></i><span class="gap"></span><div class="vthumb mid"><i class="grip"></i></div><span class="grow"></span><i class="ar d"></i></div>
    </div>
  </section>
</div>
</body>
</html>
```
FILE: styles.css
```css
* { box-sizing: border-box; }
body { margin: 0; display: flex; min-height: 100vh; background: #000; font: 12px/16px Roboto, "Liberation Sans", sans-serif; color: #333; }
button, input, textarea { font: inherit; color: inherit; margin: 0; padding: 0; border: 0; background: none; }
button { display: flex; align-items: center; justify-content: center; white-space: nowrap; }
input { min-width: 0; outline: 0; }
svg { display: block; flex: none; }
a { text-decoration: none; color: inherit; }
p, h1, h2, ul { margin: 0; padding: 0; font-weight: normal; list-style: none; }
.defs { position: absolute; width: 0; height: 0; }
.grow { flex: 1; }

.monitor { flex: 1 1 0; min-width: 0; display: flex; flex-direction: column; overflow: hidden; }
.monitor-left { height: 100vh; }
.monitor-right { aspect-ratio: 16 / 9; align-self: flex-start; }
.browser { flex: 1; min-height: 0; display: flex; flex-direction: column; }

/* Browser chrome */
.chrome { flex: none; height: 120px; display: flex; flex-direction: column; font: 11px/16px "Open Sans", "Noto Sans", sans-serif; color: #000; border-bottom: 1px solid #a4bbd2; background: #dae9f8; }
.aero { position: relative; height: 53px; flex: none; border-bottom: 1px solid #7288a0; background:
  radial-gradient(ellipse at 492px 34px, rgba(175,198,232,.8) 0 16px, transparent 22px),
  radial-gradient(ellipse at 568px 34px, rgba(175,198,232,.7) 0 16px, transparent 22px),
  radial-gradient(ellipse at 646px 34px, rgba(175,198,232,.8) 0 14px, transparent 20px),
  radial-gradient(ellipse at 720px 34px, rgba(175,198,232,.8) 0 14px, transparent 20px),
  radial-gradient(ellipse at 1028px 30px, rgba(148,150,184,.7) 0 14px, transparent 22px),
  radial-gradient(ellipse at 1104px 30px, rgba(148,150,184,.7) 0 14px, transparent 22px),
  radial-gradient(ellipse at 1180px 30px, rgba(148,150,184,.7) 0 14px, transparent 22px),
  radial-gradient(ellipse at 1862px 32px, rgba(160,178,210,.9) 0 14px, transparent 24px),
  linear-gradient(to bottom, transparent, rgba(158,178,184,.85) 50%, rgba(160,180,184,.9) 85%),
  linear-gradient(to right, #9fb894, #6f8a6e 18%, #6c8664 40%, #8aab6c 60%, #9abb7e 85%, #aac888); }
.aero2 { background:
  linear-gradient(to bottom, transparent, rgba(168,188,204,.85) 55%, rgba(168,190,212,.95)),
  linear-gradient(to right, #90aa8c, #7a9a76 14%, #8fb884 35%, #a8d89c 55%, #b4e2a6 80%, #c4ecb4); }
.menubar { display: flex; gap: 14px; height: 20px; align-items: center; padding: 0 6px; width: max-content; text-shadow: 0 0 4px #fff; }
.menubar.boxed { background: rgba(225,236,222,.7); border-radius: 0 0 4px 0; }
.winctl { position: absolute; top: 0; right: 3px; height: 18px; display: flex; border: 1px solid #4a5a4c; border-top: 0; border-radius: 0 0 4px 4px; overflow: hidden; background: rgba(210,228,200,.5); color: #fff; }
.winctl button { width: 27px; border-right: 1px solid #5c6c5c; }
.winctl button:last-child { width: 48px; border: 0; }
.winctl .close { background: linear-gradient(#d9846f, #b83a22 50%, #c8553a); }
.winctl.clear { border-color: #8fae86; }
.winctl.clear button { border-color: #a4c49a; }
.winctl svg { filter: drop-shadow(0 0 1px #333); }
.min { width: 11px; height: 5px; background: #fff; border: 1px solid #555; }
.max { width: 11px; height: 11px; background: #fff; border: 1px solid #555; box-shadow: inset 0 0 0 2px #fff, inset 0 0 0 4px #666; }
.tabs { position: relative; display: flex; height: 28px; margin-top: 5px; padding-left: 10px; align-items: stretch; color: #5b6b7c; }
.tabs.many { padding-left: 15px; }
.tab { width: 210px; display: flex; align-items: center; gap: 6px; padding: 0 11px 0 8px; border-right: 1px solid #53626f; }
.tab span { flex: 1; color: #000; white-space: nowrap; overflow: hidden; }
.tab.nosep, .tab.active { border-right: 0; }
.tab.active { width: 224px; padding: 0 20px 0 14px; background: linear-gradient(#f5f9fe, #e8f0fb); border: 1px solid #7288a0; border-bottom: 0; border-radius: 12px 12px 0 0; }
.tabs.many .tab.active { width: 220px; margin: 0 -5px; padding: 0 15px 0 14px; }
.newtab { width: 32px; color: #47545f; }
.navbar { height: 40px; flex: none; display: flex; align-items: center; padding-right: 13px; background: linear-gradient(#e8f1fb, #dae9f8); }
.back { position: relative; width: 33px; height: 33px; margin: 0 -17px 0 4px; border: 1px solid #93a9c2; border-radius: 50%; background: #f4f8fd; flex: none; }
.urlbox, .searchbox { height: 24px; display: flex; align-items: center; background: #fff; border: 1px solid #a5b9d0; border-radius: 2px; }
.urlbox { flex: 1; padding: 0 7px 0 19px; gap: 8px; min-width: 0; }
.url { flex: 1; margin-left: -4px; color: transparent; -webkit-background-clip: text; background-clip: text; }
.url-app { background-image: linear-gradient(to right, #000 0 85px, #808080 85px); }
.url-jira { background-image: linear-gradient(to right, #808080 0 94px, #000 94px 175px, #808080 175px); }
.dim { color: #aebccb; }
.searchbox { position: relative; width: 372px; margin-left: 7px; padding: 0 6px; gap: 6px; color: #8a8a8a; }
.searchbox input { flex: 1; font-style: italic; }
.plusbadge { position: absolute; left: 13px; top: 3px; }
input::placeholder { color: #777; opacity: 1; }
.tools { width: 194px; margin-left: 13px; display: flex; align-items: center; justify-content: space-between; }
.bar { width: 1px; height: 18px; background: #b5c6d8; }
.bar.tall { height: 34px; }
.bookmarks { flex: 1; display: flex; align-items: center; gap: 11px; padding: 0 4px; }
.bookmarks a { display: flex; align-items: center; gap: 7px; }

/* Trading app */
.apphead { height: 50px; flex: none; display: flex; justify-content: space-between; background: #f8f8f8; padding-left: 12px; overflow: hidden; }
.logo { display: flex; width: 62px; background: #fff; font-weight: bold; color: #231f20; }
.logo-r { font-size: 68px; line-height: 50px; width: 42px; }
.logo-5 { font-size: 34px; line-height: 28px; color: #d21f2f; }
.user { display: flex; align-items: center; gap: 13px; padding-right: 29px; font-size: 14px; color: #666; }
.workspace { flex: 1; min-height: 0; display: flex; }
.desk { flex: 1; min-width: 0; display: flex; flex-direction: column; background: #e4e5e7; }
.desktabs { position: relative; height: 36px; flex: none; display: flex; background: #cfd0d2; box-shadow: 0 2px 4px rgba(0,0,0,.3); }
.desktab { width: 160px; display: flex; align-items: center; gap: 5px; padding: 11px 12px 0 13px; border-bottom: 2px solid #d21f2f; font-weight: bold; }
.addtab { width: 36px; margin-left: 5px; padding-top: 9px; background: #dcdddd; }
.newtile { width: 92px; padding-top: 6px; gap: 2px; justify-content: flex-end; padding-right: 12px; border-right: 2px solid #999; border-radius: 0 12px 0 0; background: linear-gradient(to right, #cfd0d2, #bababa); }
.arrangecell { position: relative; width: 111px; display: flex; align-items: center; justify-content: flex-end; padding: 2px 11px 0 0; color: #666; }
.arrange { position: absolute; left: 2px; top: 34px; width: 87px; height: 23px; gap: 7px; background: #cfd0d2; border-radius: 0 0 12px 12px; box-shadow: 0 2px 2px rgba(0,0,0,.3); color: #555; }
.tiles { flex: 1; min-height: 0; display: flex; align-items: flex-start; gap: 10px; padding: 15px; }
.tile { width: 330px; background: #fff; box-shadow: 0 2px 2px rgba(0,0,0,.25); display: flex; flex-direction: column; }
.tile header { height: 30px; display: flex; align-items: center; gap: 6px; padding: 5px 8px 0 20px; background: #d21f2f; color: #fff; }
.tile header b { letter-spacing: 2px; width: 77px; }
.tile header b.ten { width: 26px; margin-left: 3px; }
.tile header b + svg { color: #a08088; }
.quote { position: relative; margin: 2px 12px 0; }
.q-head, .q-foot, .q-mid { display: flex; }
.q-head { height: 26px; gap: 4px; }
.q-side { flex: 1; display: flex; align-items: center; justify-content: center; color: #a5a5a5; padding-top: 3px; }
.q-tab { position: relative; z-index: 1; width: 49px; display: flex; align-items: center; justify-content: center; background: #f1f2f4; border: 1px solid #ccced0; }
.q-head .q-tab { border-bottom: 0; margin-bottom: -1px; padding-top: 4px; border-radius: 2px 2px 0 0; }
.q-head .q-side:first-child { margin-right: -4px; }
.q-head .q-side:last-child { margin-left: -4px; }
.q-mid { gap: 4px; height: 74px; }
.q-mid button { flex: 1; padding-top: 4px; font: bold 60px/60px Roboto, sans-serif; background: #f1f2f4; border: 1px solid #ccced0; border-radius: 2px; }
.q-foot { height: 26px; margin-top: -1px; color: #808080; }
.q-foot .q-tab { border-top: 0; color: #333; font-size: 14px; border-radius: 0 0 2px 2px; }
.q-foot > span { flex: 1; text-align: center; padding-top: 12px; white-space: nowrap; }
.pent { position: absolute; z-index: 2; left: 142px; top: 21px; }
.amount { display: flex; width: 129px; height: 18px; margin: 17px 0 0 98px; border: 1px solid #d21f2f; font-weight: bold; }
.amount button { flex: 1; }
.on { background: #d21f2f; color: #fff; }
.sides { display: flex; justify-content: space-between; padding: 9px 27px 0; }
.sides button { width: 112px; height: 28px; border: 1px solid #ddd; border-radius: 14px; font-weight: bold; font-size: 14px; padding-top: 2px; }
.seg { display: flex; width: 200px; height: 19px; margin: 12px 0 8px 60px; border: 1px solid #d21f2f; border-radius: 10px; overflow: hidden; font-size: 10px; font-weight: bold; }
.seg button { flex: 1 1 auto; }
.depth { display: flex; gap: 12px; padding: 0 10px; color: #666; font-size: 12px; }
.bids, .asks { flex: 1; overflow: hidden; background: #f1f2f4; }
.depth p { height: 22px; display: flex; align-items: center; padding-top: 2px; white-space: pre; }
.bids p { justify-content: flex-end; padding-right: 7px; }
.depth:not(.deep) .asks { background: linear-gradient(#eee 1px, #fff 1px); }
.deep .bids p { padding-right: 2px; }
.depth p.best { color: #7fb34a; }
.depth small { font-size: 11px; margin-right: 2px; }
.bids small { margin-left: 2px; }
.depth b { font-size: 13px; }
.depth strong { color: #000; }
.offall { align-self: center; height: 18px; margin: 3px 0 6px; padding: 0 11px; border: 1px solid #bbb; border-radius: 9px; font-size: 11px; font-weight: bold; }
.market { align-self: center; display: flex; align-items: center; width: 122px; height: 22px; margin-bottom: -3px; padding: 4px 11px 0 14px; gap: 5px; background: #e0e1e3; border-top: 2px solid #b4b5b8; color: #666; }
.market em { margin-left: auto; width: 24px; height: 15px; border-radius: 8px; background: #d21f2f; color: #fff; font-style: normal; text-align: center; font-size: 11px; line-height: 15px; }
.splitter { height: 8px; flex: none; background: #c8cbcc; display: flex; justify-content: center; align-items: center; }
.splitter i { width: 8px; height: 4px; border: solid #555; border-width: 1px 0; }
.blotter { height: 290px; flex: none; display: flex; flex-direction: column; }
.blotbar { height: 36px; flex: none; display: flex; align-items: center; padding-right: 14px; background: #66666f; color: #fff; box-shadow: 0 2px 4px rgba(0,0,0,.3); position: relative; }
.btab { width: 160px; height: 36px; justify-content: flex-start; padding: 12px 0 0 13px; font-size: 13px; }
.badd { gap: 5px; padding: 12px 0 0 18px; }
.offorders { height: 24px; padding: 0 11px; margin-right: 26px; border: 1px solid #fff; border-radius: 12px; background: #d21f2f; font-size: 11px; }
.medesk { display: flex; height: 24px; padding: 2px 11px 2px 2px; gap: 10px; border: 1px solid #fff; border-radius: 12px; font-size: 11px; }
.medesk button { font-weight: bold; }
.medesk .on { width: 37px; border-radius: 10px; background: #fff; color: #d21f2f; }
.blotfilter { display: flex; justify-content: space-between; height: 31px; margin: 9px 17px 13px 10px; flex: none; }
.bfilter { width: 855px; padding: 0 5px; background: #fff; border: 1px solid #a8a8a8; border-radius: 4px; }
.bfilter::placeholder { color: #999; }
.custom { width: 105px; gap: 4px; padding-top: 6px; border: 1px solid #cacbcd; border-radius: 3px; color: #808080; }
.blotgrid { flex: 1; min-height: 0; margin: 0 3px 0 10px; display: flex; flex-direction: column; overflow: hidden; border: solid #999; border-width: 0 1px; background: #eee; }
.blotgrid table { width: 1439px; table-layout: fixed; border-collapse: collapse; font-size: 11px; background: #fff; }
.blotgrid th { height: 20px; padding: 0 16px 4px 0; font-weight: normal; color: #666; background: #e0e0e0; white-space: nowrap; }
.blotgrid td { height: 20px; padding: 0; text-align: center; white-space: nowrap; overflow: hidden; color: #222; }
.blotgrid td svg { margin-left: 2px; }
.c76 { width: 76px; } .c120 { width: 120px; } .c100 { width: 100px; } .c80 { width: 80px; } .c48 { width: 48px; } .c84 { width: 84px; } .c45 { width: 45px; } .c95 { width: 95px; } .c86 { width: 86px; } .c113 { width: 113px; } .c87 { width: 87px; } .c114 { width: 114px; } .c126 { width: 126px; } .c57 { width: 57px; }

/* Scrollbars */
.hscroll { height: 17px; flex: none; display: flex; background: #f0f0f0; }
.hthumb { flex: 1; margin: 1px 0; border: 1px solid #999; border-radius: 2px; background: linear-gradient(#f4f4f4 45%, #d0d0d0 50%, #dedede); display: flex; align-items: center; justify-content: center; }
.hthumb .grip { width: 7px; height: 7px; background: repeating-linear-gradient(to right, #555 0 1px, transparent 1px 3px); }
.hscroll .ar { width: 18px; flex: none; }
.hscroll .ar.r { width: 32px; }
.vscroll { width: 16px; flex: none; display: flex; flex-direction: column; background: #f0f0f0; border-left: 1px solid #e0e0e0; }
.vthumb { border: 1px solid #999; border-radius: 2px; background: linear-gradient(to right, #f4f4f4 45%, #d0d0d0 50%, #c4c4c4); display: flex; align-items: center; justify-content: center; }
.vthumb .grip { width: 7px; height: 8px; background: repeating-linear-gradient(#555 0 1px, transparent 1px 3px); }
.vscroll .ar { height: 18px; flex: none; }
.ar { display: flex; align-items: center; justify-content: center; }
.ar::before { content: ""; border: 4px solid transparent; }
.ar.u::before { border-top: 0; border-bottom-color: #333; }
.ar.d::before { border-bottom: 0; border-top-color: #333; }
.ar.l::before { border-left: 0; border-right-color: #333; }
.ar.r::before { border-right: 0; border-left-color: #333; }
.tiny { height: 21px; } .full { flex: 1; border-bottom: 0; } .long { height: 703px; } .mid { height: 120px; }
.gap { height: 165px; }

/* Side widgets */
.side { width: 481px; flex: none; display: flex; flex-direction: column; background: #e4e5e7; }
.redbar { height: 36px; flex: none; background: #d21f2f; }
.sidebody { flex: 1; min-height: 0; display: flex; }
.panels { flex: 1; display: flex; flex-direction: column; min-height: 0; margin-right: 6px; }
.panel { background: #fff; display: flex; flex-direction: column; border-bottom: 1px solid #b4b6b8; }
.phead { height: 46px; flex: none; display: flex; background: #f1f2f4; padding-left: 15px; }
h2 { font-size: 14px; line-height: 18px; padding-top: 14px; text-transform: uppercase; color: #8a8a8a; }
h2::first-letter { font-size: 18px; }
.fav { height: 300px; }
.favgrid { display: flex; gap: 10px; padding: 5px 0 0 2px; }
.favgrid table { width: 220px; table-layout: fixed; border-collapse: collapse; }
.favgrid td, .favgrid th { height: 30px; padding: 0; white-space: nowrap; text-align: right; color: #666; font-size: 13px; }
.favgrid th { width: 33px; text-align: left; font-size: 14px; color: #222; }
.favgrid td:nth-child(1) { width: 30px; }
.favgrid td:nth-child(3) { width: 19px; text-align: left; font-size: 14px; color: #888; }
.favgrid td:nth-child(4) { width: 37px; }
.favgrid td:nth-child(6) { width: 47px; }
.favgrid td:nth-child(5), .favgrid td:nth-child(7) { width: 22px; font-size: 15px; font-weight: bold; color: #d21f2f; }
.notif { height: 301px; }
.btngroup { display: flex; height: 31px; margin-top: 15px; border: 1px solid #c8cacd; border-radius: 2px; background: #eaebed; box-shadow: inset 0 2px 3px rgba(0,0,0,.1); }
.btngroup button { padding: 8px 15px 0; border-right: 1px solid #c8cacd; color: #777; }
.btngroup button:last-child { border: 0; }
.clearbtn { width: 60px; height: 31px; margin: 15px 0 0 5px; padding-top: 8px; border: 1px solid #c8cacd; border-radius: 2px; color: #777; }
.pfilter { height: 22px; flex: none; display: flex; align-items: center; padding: 0 4px 0 6px; gap: 16px; background: #fff; color: #333; font-size: 14px; }
.pfilter input { flex: 1; }
.pfilter input::placeholder { color: #757575; }
.shade { box-shadow: 0 3px 6px rgba(0,0,0,.15); position: relative; z-index: 1; }
.peek { height: 17px; flex: none; display: flex; padding-left: 184px; gap: 9px; overflow: hidden; }
.peek span { width: 19px; height: 12px; border-radius: 0 0 3px 3px; background: #d4d5d7; color: #888; text-align: center; line-height: 6px; overflow: hidden; font-weight: bold; }
.scrollrow { flex: 1; min-height: 0; display: flex; overflow: hidden; }
.notes { flex: 1; font-size: 11px; letter-spacing: 1px; color: #777; }
.notes li { height: 72px; padding: 5px 5px 0 11px; border-bottom: 1px solid #ccc; }
.notes li:last-child { border: 0; }
.notes p, .notes div { height: 22px; line-height: 23px; white-space: nowrap; }
.notes div { display: flex; align-items: center; }
.notes time { margin: 0 5px 0 auto; color: #ff9c0d; font-weight: bold; }
.tickets { flex: 1; min-height: 0; border: 0; overflow: hidden; }
.tbtns { height: 24px; flex: none; display: flex; gap: 5px; padding-left: 44px; color: #555; }
.tbtns div { display: flex; }
.tbtns button { height: 24px; padding-bottom: 4px; border: 1px solid #c4c6c8; border-top: 0; border-radius: 0 0 3px 3px; flex: none; }
.tbtns div button + button { border-left: 0; }
.w63 { width: 63px; } .w71 { width: 71px; } .w61 { width: 61px; } .w45 { width: 45px; } .w84 { width: 84px; } .w77 { width: 77px; }
.trow { margin-top: -6px; }
.cards { flex: 1; padding: 6px 12px 0; overflow: hidden; }
.cards article { height: 58px; margin-bottom: 8px; padding: 2px 12px; border-radius: 3px; background: #f1f2f4; color: #555; }
.cards article div { display: flex; align-items: center; height: 18px; }
.cards svg { margin-right: 7px; color: #555; }
.cards time { margin: 0 auto 0 92px; }
.cards b + b { margin-left: 5px; }
.cards b.deal { margin-left: 12px; flex: 1; }
.cards b.red { color: #d21f2f; }
.cards b.green { color: #4a7a1e; }
.editbar { height: 30px; flex: none; padding: 4px 5px; background: #adb0b3; }
.editbar button { width: 100px; height: 24px; border-radius: 3px; background: #5f6468; color: #fff; padding-top: 3px; }
.status { height: 20px; flex: none; display: flex; justify-content: flex-end; font-size: 11px; line-height: 20px; background: #f8f8f8; color: #000; }
.status span { padding: 0 5px 0 6px; }
.status span + span { border-left: 1px solid #000; }

/* Taskbar */
.taskbar { height: 40px; flex: none; display: flex; align-items: center; padding-left: 9px; border-top: 1px solid #2c3a4c; gap: 3px; background: linear-gradient(to right, #4f6a42, #4b673e 554px, #a5c8ee 556px, #acd2fb 900px, #b9dcff 1250px, #a9cbf5 1555px, #56734a 1575px, #587347 1650px, #3c4f30 1700px, #4c6242); }
.taskbar button { width: 59px; height: 39px; flex: none; position: relative; }
.taskbar .orb { width: 36px; margin-right: 10px; }
.taskbar .open { border: 1px solid #1d2a33; border-radius: 3px; box-shadow: inset 0 0 0 1px rgba(255,255,255,.5); background: linear-gradient(160deg, rgba(255,255,255,.45), rgba(255,255,255,.1) 60%); }
.taskbar .multi { border-right: 4px double #1d2a33; }
.taskbar .lit { background: linear-gradient(160deg, #e4eae2, #a3b39c); }
.taskbar button span { position: absolute; inset: 0; display: flex; align-items: center; justify-content: center; }
.taskbar .java span { font: 9px/9px Roboto, sans-serif; color: #f6a623; text-align: center; }
.taskbar .word span { padding-right: 13px; font: bold 12px/16px "Open Sans", sans-serif; color: #fff; }
.ghost { width: 300px; height: 39px; margin-left: 44px; display: flex; flex-direction: column; justify-content: space-between; filter: blur(3px); }
.ghost i { height: 7px; background: rgba(70,100,140,.55); }
.ghost i:nth-child(1) { background: linear-gradient(to right, rgba(70,100,140,.55) 215px, transparent 220px, #5a9be0 225px 278px, transparent 282px); }
.ghost i:nth-child(2) { width: 130px; }
.ghost i:nth-child(3) { width: 228px; }
.tray { display: flex; align-items: center; gap: 8px; color: #fff; font: 12px/17px "Open Sans", sans-serif; }
.tray > span { margin-right: 6px; }
.tray > svg { margin-right: 1px; }
.tray time { text-align: center; margin-left: 4px; }
.taskbar .showdesk { width: 13px; margin: 0 1px 0 8px; border: 1px solid #8ba283; background: rgba(255,255,255,.15); }

/* Issue tracker */
.jira { flex: 1; min-height: 0; display: flex; background: #fff; font: 14px/20px "Liberation Sans", Arial, sans-serif; overflow: hidden; }
.issue { flex: 1; min-width: 0; overflow: hidden; }
.issue a { color: #3b73af; }
.ihead { height: 80px; display: flex; padding: 20px 20px 0; gap: 10px; background: #f5f5f5; border-bottom: 1px solid #ccc; }
.ititle { flex: 1; }
h1 { font-size: 24px; line-height: 28px; padding-top: 4px; }
.ipager { text-align: right; }
.ipager svg { display: inline-block; margin-left: 4px; }
.ipager svg.first { margin-left: 8px; }
.ibar { display: flex; gap: 10px; padding: 10px 20px; }
.jgroup { display: flex; }
.jbtn { height: 30px; padding: 0 10px; gap: 4px; border: 1px solid #ccc; border-radius: 3px; background: linear-gradient(#fff, #f2f2f2); color: #333; }
.jgroup .jbtn + .jbtn { margin-left: -1px; }
.ibar svg { color: #666; }
.steps { width: 1169px; margin-left: 44px; table-layout: fixed; border-collapse: separate; border-spacing: 0; }
.steps td { height: 41px; padding: 10px 10px 9px; vertical-align: top; border-bottom: 1px solid #ccc; }
.steps .first td { height: 30px; padding: 0 10px 9px; color: #999; }
.s34 { width: 34px; } .s55 { width: 55px; } .s344 { width: 344px; } .s320 { width: 320px; }
.drag { display: block; width: 9px; height: 24px; margin-top: -3px; background: repeating-linear-gradient(to right, transparent 0 2px, #fff 2px 3px), repeating-linear-gradient(#ccc 0 2px, #fff 2px 3px); }
.drag.tall { height: 70px; margin: 0; }
.steps .editing td { height: 90px; padding: 6px 10px 0; background: #ebf2ff; }
.steps .editing td:nth-child(2) { padding-left: 3px; }
.editrow { display: flex; gap: 8px; padding-left: 19px; margin-right: -10px; }
.editrow textarea { width: 296px; height: 77px; padding: 3px 3px; resize: none; background: #fff; border: 1px solid #ccc; border-top-color: #999; border-radius: 2px; font: 13px/15px "Liberation Mono", "Courier New", monospace; color: #000; }
.editrow .jbtn { margin-top: 3px; }
.editrow a { margin: 3px 0 0 -4px; }
.jscroll { width: 17px; }
```
